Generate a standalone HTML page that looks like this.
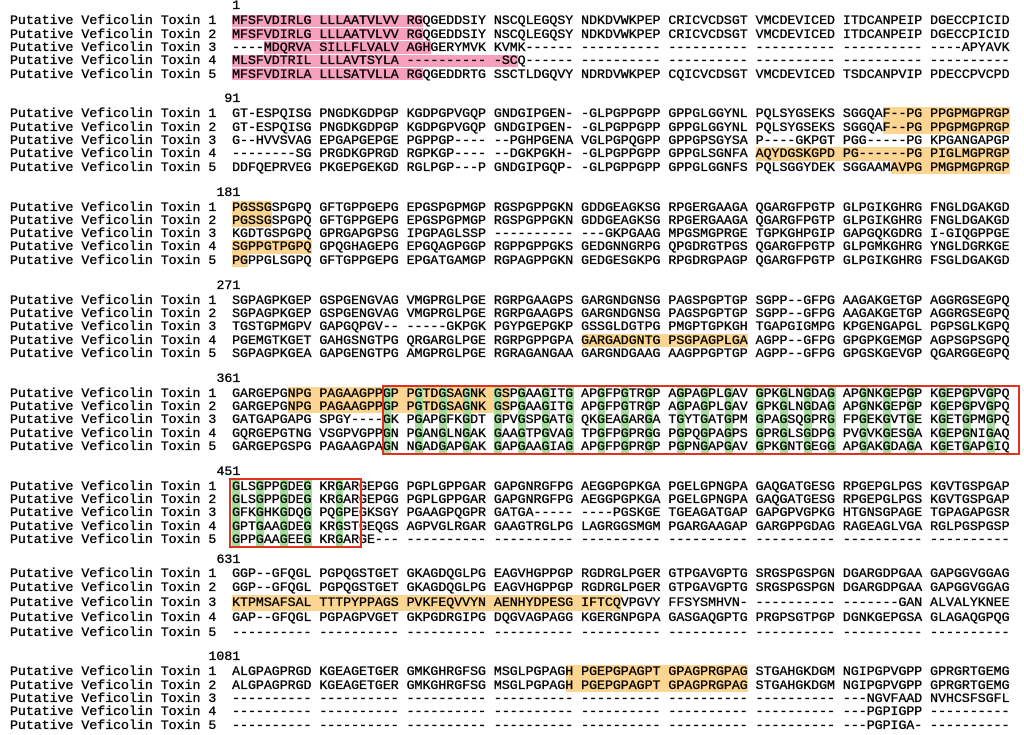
<!DOCTYPE html>
<html><head><meta charset="utf-8">
<style>
html,body{margin:0;padding:0;background:#fff;}
body{width:1024px;height:735px;position:relative;overflow:hidden;}
.l{position:absolute;left:10px;font-family:"Liberation Mono",monospace;font-size:13.23px;line-height:13.3px;height:13.3px;white-space:pre;color:#000;-webkit-text-stroke:0.35px #000;z-index:3;}
.p{position:absolute;background:#f6a0bd;z-index:1;}
.o{position:absolute;background:#fbd591;z-index:1;}
.g{position:absolute;background:#a6dd9e;width:7.94px;z-index:2;}
.r{position:absolute;border:2px solid #e2311d;z-index:4;box-sizing:border-box;}
</style></head><body>

<div class="p" style="left:232.3px;top:14.8px;width:190.6px;height:12.4px"></div>
<div class="p" style="left:232.3px;top:28.1px;width:190.6px;height:12.4px"></div>
<div class="p" style="left:264.1px;top:41.4px;width:166.7px;height:12.4px"></div>
<div class="p" style="left:232.3px;top:54.7px;width:285.9px;height:12.4px"></div>
<div class="p" style="left:232.3px;top:68px;width:190.6px;height:12.4px"></div>
<div class="o" style="left:883.4px;top:107.45px;width:127px;height:26.6px"></div>
<div class="o" style="left:756.4px;top:147.35px;width:254px;height:13.3px"></div>
<div class="o" style="left:891.3px;top:160.65px;width:119.1px;height:13.3px"></div>
<div class="o" style="left:232.3px;top:200.55px;width:39.7px;height:26.6px"></div>
<div class="o" style="left:232.3px;top:240.45px;width:79.4px;height:13.3px"></div>
<div class="o" style="left:232.3px;top:253.75px;width:15.9px;height:13.3px"></div>
<div class="o" style="left:581.7px;top:333.55px;width:166.7px;height:13.3px"></div>
<div class="o" style="left:287.9px;top:386.75px;width:222.3px;height:26.6px"></div>
<div class="g" style="left:383.18px;top:386.75px;height:66.5px"></div>
<div class="g" style="left:414.94px;top:386.75px;height:66.5px"></div>
<div class="g" style="left:438.76px;top:386.75px;height:66.5px"></div>
<div class="g" style="left:462.58px;top:386.75px;height:66.5px"></div>
<div class="g" style="left:494.34px;top:386.75px;height:66.5px"></div>
<div class="g" style="left:518.16px;top:386.75px;height:66.5px"></div>
<div class="g" style="left:541.98px;top:386.75px;height:66.5px"></div>
<div class="g" style="left:565.8px;top:386.75px;height:66.5px"></div>
<div class="g" style="left:597.56px;top:386.75px;height:66.5px"></div>
<div class="g" style="left:621.38px;top:386.75px;height:66.5px"></div>
<div class="g" style="left:645.2px;top:386.75px;height:66.5px"></div>
<div class="g" style="left:676.96px;top:386.75px;height:66.5px"></div>
<div class="g" style="left:700.78px;top:386.75px;height:66.5px"></div>
<div class="g" style="left:724.6px;top:386.75px;height:66.5px"></div>
<div class="g" style="left:756.36px;top:386.75px;height:66.5px"></div>
<div class="g" style="left:780.18px;top:386.75px;height:66.5px"></div>
<div class="g" style="left:804px;top:386.75px;height:66.5px"></div>
<div class="g" style="left:827.82px;top:386.75px;height:66.5px"></div>
<div class="g" style="left:859.58px;top:386.75px;height:66.5px"></div>
<div class="g" style="left:883.4px;top:386.75px;height:66.5px"></div>
<div class="g" style="left:907.22px;top:386.75px;height:66.5px"></div>
<div class="g" style="left:938.98px;top:386.75px;height:66.5px"></div>
<div class="g" style="left:962.8px;top:386.75px;height:66.5px"></div>
<div class="g" style="left:986.62px;top:386.75px;height:66.5px"></div>
<div class="r" style="left:382px;top:385px;width:638px;height:70px"></div>
<div class="g" style="left:232.32px;top:479.85px;height:66.5px"></div>
<div class="g" style="left:256.14px;top:479.85px;height:66.5px"></div>
<div class="g" style="left:279.96px;top:479.85px;height:66.5px"></div>
<div class="g" style="left:303.78px;top:479.85px;height:66.5px"></div>
<div class="g" style="left:335.54px;top:479.85px;height:66.5px"></div>
<div class="r" style="left:229px;top:478px;width:133px;height:70px"></div>
<div class="o" style="left:232.3px;top:594.85px;width:389.1px;height:16px"></div>
<div class="o" style="left:565.8px;top:665.35px;width:182.6px;height:26.6px"></div>

<div class="l" style="left:232.3px;top:-0.65px">1</div>
<div class="l" style="top:14.35px">Putative Veficolin Toxin 1  MFSFVDIRLG LLLAATVLVV RGQGEDDSIY NSCQLEGQSY NDKDVWKPEP CRICVCDSGT VMCDEVICED ITDCANPEIP DGECCPICID</div>
<div class="l" style="top:27.65px">Putative Veficolin Toxin 2  MFSFVDIRLG LLLAATVLVV RGQGEDDSIY NSCQLEGQSY NDKDVWKPEP CRICVCDSGT VMCDEVICED ITDCANPEIP DGECCPICID</div>
<div class="l" style="top:40.95px">Putative Veficolin Toxin 3  ----MDQRVA SILLFLVALV AGHGERYMVK KVMK------ ---------- ---------- ---------- ---------- ----APYAVK</div>
<div class="l" style="top:54.25px">Putative Veficolin Toxin 4  MLSFVDTRIL LLLAVTSYLA ---------- -SCQ------ ---------- ---------- ---------- ---------- ----------</div>
<div class="l" style="top:67.55px">Putative Veficolin Toxin 5  MFSFVDIRLA LLLSATVLLA RGQGEDDRTG SSCTLDGQVY NDRDVWKPEP CQICVCDSGT VMCDEVICED TSDCANPVIP PDECCPVCPD</div>

<div class="l" style="left:224.4px;top:92.45px">91</div>
<div class="l" style="top:107.45px">Putative Veficolin Toxin 1  GT-ESPQISG PNGDKGDPGP KGDPGPVGQP GNDGIPGEN- -GLPGPPGPP GPPGLGGYNL PQLSYGSEKS SGGQAF--PG PPGPMGPRGP</div>
<div class="l" style="top:120.75px">Putative Veficolin Toxin 2  GT-ESPQISG PNGDKGDPGP KGDPGPVGQP GNDGIPGEN- -GLPGPPGPP GPPGLGGYNL PQLSYGSEKS SGGQAF--PG PPGPMGPRGP</div>
<div class="l" style="top:134.05px">Putative Veficolin Toxin 3  G--HVVSVAG EPGAPGEPGE PGPPGP---- --PGHPGENA VGLPGPQGPP GPPGPSGYSA P----GKPGT PGG-----PG KPGANGAPGP</div>
<div class="l" style="top:147.35px">Putative Veficolin Toxin 4  --------SG PRGDKGPRGD RGPKGP---- --DGKPGKH- -GLPGPPGPP GPPGLSGNFA AQYDGSKGPD PG------PG PIGLMGPRGP</div>
<div class="l" style="top:160.65px">Putative Veficolin Toxin 5  DDFQEPRVEG PKGEPGEKGD RGLPGP---P GNDGIPGQP- -GLPGPPGPP GPPGLGGNFS PQLSGGYDEK SGGAAMAVPG PMGPMGPRGP</div>

<div class="l" style="left:216.5px;top:185.55px">181</div>
<div class="l" style="top:200.55px">Putative Veficolin Toxin 1  PGSSGSPGPQ GFTGPPGEPG EPGSPGPMGP RGSPGPPGKN GDDGEAGKSG RPGERGAAGA QGARGFPGTP GLPGIKGHRG FNGLDGAKGD</div>
<div class="l" style="top:213.85px">Putative Veficolin Toxin 2  PGSSGSPGPQ GFTGPPGEPG EPGSPGPMGP RGSPGPPGKN GDDGEAGKSG RPGERGAAGA QGARGFPGTP GLPGIKGHRG FNGLDGAKGD</div>
<div class="l" style="top:227.15px">Putative Veficolin Toxin 3  KGDTGSPGPQ GPRGAPGPSG IPGPAGLSSP ---------- ---GKPGAAG MPGSMGPRGE TGPKGHPGIP GAPGQKGDRG I-GIQGPPGE</div>
<div class="l" style="top:240.45px">Putative Veficolin Toxin 4  SGPPGTPGPQ GPQGHAGEPG EPGQAGPGGP RGPPGPPGKS GEDGNNGRPG QPGDRGTPGS QGARGFPGTP GLPGMKGHRG YNGLDGRKGE</div>
<div class="l" style="top:253.75px">Putative Veficolin Toxin 5  PGPPGLSGPQ GFTGPPGEPG EPGATGAMGP RGPAGPPGKN GEDGESGKPG RPGDRGPAGP QGARGFPGTP GLPGIKGHRG FSGLDGAKGD</div>

<div class="l" style="left:216.5px;top:278.65px">271</div>
<div class="l" style="top:293.65px">Putative Veficolin Toxin 1  SGPAGPKGEP GSPGENGVAG VMGPRGLPGE RGRPGAAGPS GARGNDGNSG PAGSPGPTGP SGPP--GFPG AAGAKGETGP AGGRGSEGPQ</div>
<div class="l" style="top:306.95px">Putative Veficolin Toxin 2  SGPAGPKGEP GSPGENGVAG VMGPRGLPGE RGRPGAAGPS GARGNDGNSG PAGSPGPTGP SGPP--GFPG AAGAKGETGP AGGRGSEGPQ</div>
<div class="l" style="top:320.25px">Putative Veficolin Toxin 3  TGSTGPMGPV GAPGQPGV-- -----GKPGK PGYPGEPGKP GSSGLDGTPG PMGPTGPKGH TGAPGIGMPG KPGENGAPGL PGPSGLKGPQ</div>
<div class="l" style="top:333.55px">Putative Veficolin Toxin 4  PGEMGTKGET GAHGSNGTPG QRGARGLPGE RGRPGPPGPA GARGADGNTG PSGPAGPLGA AGPP--GFPG GPGPKGEMGP AGPSGPSGPQ</div>
<div class="l" style="top:346.85px">Putative Veficolin Toxin 5  SGPAGPKGEA GAPGENGTPG AMGPRGLPGE RGRAGANGAA GARGNDGAAG AAGPPGPTGP AGPP--GFPG GPGSKGEVGP QGARGGEGPQ</div>

<div class="l" style="left:216.5px;top:371.75px">361</div>
<div class="l" style="top:386.75px">Putative Veficolin Toxin 1  GARGEPGNPG PAGAAGPPGP PGTDGSAGNK GSPGAAGITG APGFPGTRGP AGPAGPLGAV GPKGLNGDAG APGNKGEPGP KGEPGPVGPQ</div>
<div class="l" style="top:400.05px">Putative Veficolin Toxin 2  GARGEPGNPG PAGAAGPPGP PGTDGSAGNK GSPGAAGITG APGFPGTRGP AGPAGPLGAV GPKGLNGDAG APGNKGEPGP KGEPGPVGPQ</div>
<div class="l" style="top:413.35px">Putative Veficolin Toxin 3  GATGAPGAPG SPGY----GK PGAPGFKGDT GPVGSPGATG QKGEAGARGA TGYTGATGPM GPAGSQGPRG FPGEKGVTGE KGETGPMGPQ</div>
<div class="l" style="top:426.65px">Putative Veficolin Toxin 4  GQRGEPGTNG VSGPVGPPGN PGANGLNGAK GAAGTPGVAG TPGFPGPRGG PGPQGPAGPS GPRGLSGDPG PVGVKGESGA KGEPGNIGAQ</div>
<div class="l" style="top:439.95px">Putative Veficolin Toxin 5  GARGEPGSPG PAGAAGPAGN NGADGAPGAK GAPGAAGIAG APGFPGPRGP PGPNGAPGAV GPKGNTGEGG APGAKGDAGA KGETGAPGIQ</div>

<div class="l" style="left:216.5px;top:464.85px">451</div>
<div class="l" style="top:479.85px">Putative Veficolin Toxin 1  GLSGPPGDEG KRGARGEPGG PGPLGPPGAR GAPGNRGFPG AEGGPGPKGA PGELGPNGPA GAQGATGESG RPGEPGLPGS KGVTGSPGAP</div>
<div class="l" style="top:493.15px">Putative Veficolin Toxin 2  GLSGPPGDEG KRGARGEPGG PGPLGPPGAR GAPGNRGFPG AEGGPGPKGA PGELGPNGPA GAQGATGESG RPGEPGLPGS KGVTGSPGAP</div>
<div class="l" style="top:506.45px">Putative Veficolin Toxin 3  GFKGHKGDQG PQGPEGKSGY PGAAGPQGPR GATGA----- ----PGSKGE TGEAGATGAP GAPGPVGPKG HTGNSGPAGE TGPAGAPGSR</div>
<div class="l" style="top:519.75px">Putative Veficolin Toxin 4  GPTGAAGDEG KRGSTGEQGS AGPVGLRGAR GAAGTRGLPG LAGRGGSMGM PGARGAAGAP GARGPPGDAG RAGEAGLVGA RGLPGSPGSP</div>
<div class="l" style="top:533.05px">Putative Veficolin Toxin 5  GPPGAAGEEG KRGARGE--- ---------- ---------- ---------- ---------- ---------- ---------- ----------</div>

<div class="l" style="left:216.5px;top:553.35px">631</div>
<div class="l" style="top:567.35px">Putative Veficolin Toxin 1  GGP--GFQGL PGPQGSTGET GKAGDQGLPG EAGVHGPPGP RGDRGLPGER GTPGAVGPTG SRGSPGSPGN DGARGDPGAA GAPGGVGGAG</div>
<div class="l" style="top:581.35px">Putative Veficolin Toxin 2  GGP--GFQGL PGPQGSTGET GKAGDQGLPG EAGVHGPPGP RGDRGLPGER GTPGAVGPTG SRGSPGSPGN DGARGDPGAA GAPGGVGGAG</div>
<div class="l" style="top:596.35px">Putative Veficolin Toxin 3  KTPMSAFSAL TTTPYPPAGS PVKFEQVVYN AENHYDPESG IFTCQVPGVY FFSYSMHVN- ---------- -------GAN ALVALYKNEE</div>
<div class="l" style="top:611.35px">Putative Veficolin Toxin 4  GAP--GFQGL PGPAGPVGET GKPGDRGIPG DQGVAGPAGG KGERGNPGPA GASGAQGPTG PRGPSGTPGP DGNKGEPGSA GLAGAQGPQG</div>
<div class="l" style="top:626.35px">Putative Veficolin Toxin 5  ---------- ---------- ---------- ---------- ---------- ---------- ---------- ---------- ----------</div>

<div class="l" style="left:208.5px;top:650.35px">1081</div>
<div class="l" style="top:665.35px">Putative Veficolin Toxin 1  ALGPAGPRGD KGEAGETGER GMKGHRGFSG MSGLPGPAGH PGEPGPAGPT GPAGPRGPAG STGAHGKDGM NGIPGPVGPP GPRGRTGEMG</div>
<div class="l" style="top:678.65px">Putative Veficolin Toxin 2  ALGPAGPRGD KGEAGETGER GMKGHRGFSG MSGLPGPAGH PGEPGPAGPT GPAGPRGPAG STGAHGKDGM NGIPGPVGPP GPRGRTGEMG</div>
<div class="l" style="top:691.95px">Putative Veficolin Toxin 3  ---------- ---------- ---------- ---------- ---------- ---------- ---------- ---NGVFAAD NVHCSFSGFL</div>
<div class="l" style="top:705.25px">Putative Veficolin Toxin 4  ---------- ---------- ---------- ---------- ---------- ---------- ---------- ---PGPIGPP ----------</div>
<div class="l" style="top:718.55px">Putative Veficolin Toxin 5  ---------- ---------- ---------- ---------- ---------- ---------- ---------- ---PGPIGA- ----------</div>

</body></html>
